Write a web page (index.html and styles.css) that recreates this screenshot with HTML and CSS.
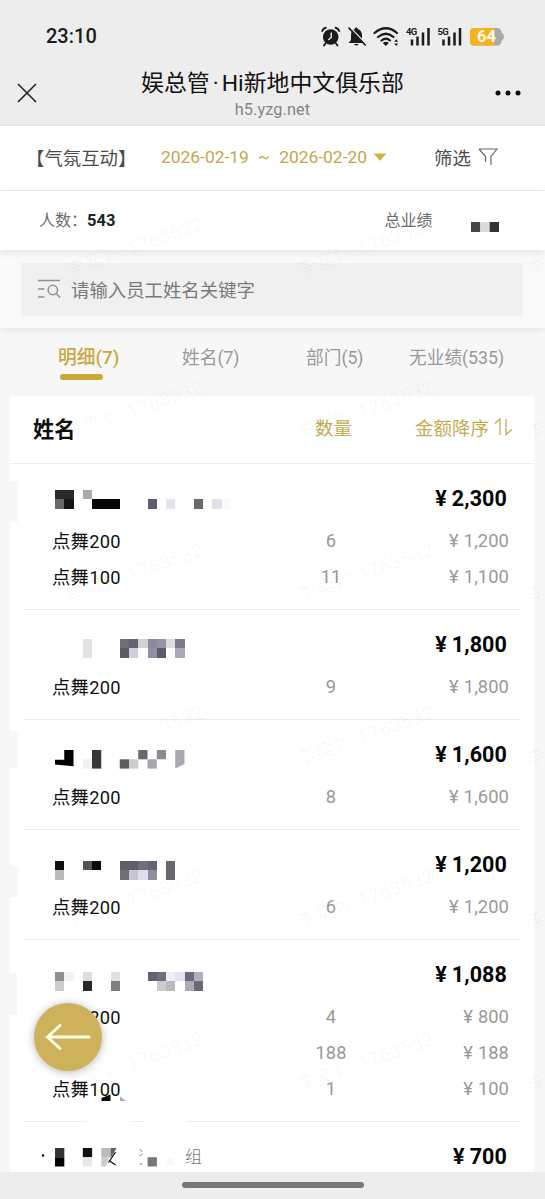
FILE: index.html
```html
<!DOCTYPE html>
<html lang="zh-CN">
<head>
<meta charset="utf-8">
<title>娱总管</title>
<link rel="stylesheet" href="styles.css">
</head>
<body>
<div class="screen">
  <header class="top">
    <div class="status">
      <span class="clock">23:10</span>
      <svg class="status-icons" width="186" height="24" viewBox="0 0 186 24">
        <g fill="none" stroke="#1b1b1b" stroke-width="1.9" stroke-linecap="round">
          <circle cx="11.700" cy="12" r="7.800" fill="#1b1b1b" stroke="none"/>
          <path d="M3.200 6 Q4 3.400 6.800 2.800M20.200 6 Q19.400 3.400 16.600 2.800M6.500 18.500 L5 20.500M17 18.500 L18.500 20.500"/>
          <path d="M12.200 8V12.500L9.800 14.500" stroke="#eee" stroke-width="1.400"/>
          <path d="M29.500 18H45.500L43 15V10C43 6.500 41 4.800 38.900 4.300C38.700 2 35.900 2 35.700 4.300C33.500 4.800 32 6.500 32 10V15Z" fill="#1b1b1b" stroke="none"/>
          <path d="M34.800 19Q37.300 22 39.800 19Z" fill="#1b1b1b" stroke="none"/>
          <path d="M31.500 2.800L47.500 19.300" stroke="#ededed" stroke-width="1.300"/>
          <path d="M30 3.200L46.200 20" stroke-width="1.700"/>
          <path d="M55.500 8Q67 -1.500 78 8M59 12Q67 5.500 74.500 12M62.500 15.500Q67 11.800 71 15.500" stroke-width="2.200"/>
          <path d="M63.800 18Q66.800 15.500 69.800 18L66.800 21Z" fill="#1b1b1b" stroke="none"/>
          <path d="M75.200 16.800L77.200 14.200L79.200 16.800ZM75.200 18.500H79.200L77.200 21Z" fill="#1b1b1b" stroke="none"/>
          <path d="M93 14.500V20.500M98.500 11.500V20.500M104 7.500V20.500M109.500 3V20.500M124.500 14.500V20.500M130 11.500V20.500M135.500 7.500V20.500M141 3V20.500" stroke-width="2.500" stroke-linecap="butt"/>
        </g>
        <text x="87" y="9.800" class="net">4G</text>
        <text x="118.500" y="9.800" class="net">5G</text>
        <path d="M155 3H178.500Q182 3 182.500 7.500Q185 9 185 11.700Q185 14.500 182.500 15.900Q182 20.500 178.500 20.500H155Q151 20.500 151 16.500V7Q151 3 155 3Z" fill="#aaa9a7"/>
        <path d="M155 3H175V20.500H155Q151 20.500 151 16.500V7Q151 3 155 3Z" fill="#f5b31d"/>
        <text x="158" y="17.300" class="battery">64</text>
      </svg>
    </div>
    <div class="nav">
      <svg class="close" width="20" height="20" viewBox="0 0 20 20"><path d="M1 1L19 19M19 1L1 19" stroke="#222" stroke-width="1.600" fill="none"/></svg>
      <div class="nav-title"><div class="title">娱总管<span class="dot">·</span>Hi新地中文俱乐部</div><div class="host">h5.yzg.net</div></div>
      <svg class="more" width="26" height="6" viewBox="0 0 26 6"><circle cx="3" cy="3" r="2.500"/><circle cx="13" cy="3" r="2.500"/><circle cx="23" cy="3" r="2.500"/></svg>
    </div>
  </header>

  <section class="filter">
    <span class="category">【气氛互动】</span>
    <span class="dates"><span>2026-02-19</span><span class="tilde">~</span><span>2026-02-20</span></span>
    <svg class="caret" width="14" height="8" viewBox="0 0 14 8"><path d="M0.500 0.500H13.500L7 7.800Z" fill="#d0b23f"/></svg>
    <span class="choose">筛选</span>
    <svg class="funnel" width="20" height="18" viewBox="0 0 20 18"><path d="M1 1H19L13 8.500V17M1 1L7.500 8.500V14" fill="none" stroke="#666" stroke-width="1.200"/></svg>
  </section>

  <section class="summary">
    <span>人数：</span><b>543</b>
    <span class="total">总业绩</span>
    <svg class="total-mask" width="28" height="10" viewBox="0 0 3 1" preserveAspectRatio="none"><path d="M0 0h1v1H0z" fill="#454545"/><path d="M1 0h1v1H1z" fill="#dcdcdc"/><path d="M2 0h1v1H2z" fill="#333"/></svg>
  </section>

  <section class="search">
    <div class="search-box">
      <svg width="24" height="20" viewBox="0 0 24 20"><g fill="none" stroke="#909090" stroke-width="1.500"><path d="M1 1.500H23M1 10H7.500M1 18H7.500M19 14.500L23.200 18.500"/><circle cx="15.800" cy="11" r="4.700"/></g></svg>
      <span>请输入员工姓名关键字</span>
    </div>
  </section>

  <nav class="tabs">
    <span class="tab active">明细(7)</span>
    <span class="tab">姓名(7)</span>
    <span class="tab">部门(5)</span>
    <span class="tab">无业绩(535)</span>
  </nav>

  <main class="card">
    <div class="card-head">
      <b>姓名</b><span class="count">数量</span>
      <span class="sort">金额降序<svg width="19" height="18" viewBox="0 0 19 18"><path d="M1 5.500L6 1V17M12 1V16.500L18 11.500" fill="none" stroke="#c3ac55" stroke-width="1.300"/></svg></span>
    </div>

    <div class="group">
      <div class="row lead">
        <svg class="mosaic m1" viewBox="0 0 20 2" preserveAspectRatio="none" shape-rendering="crispEdges">
          <path d="M0 0h2v1H0z" fill="#2a2a2a"/><path d="M0 1h1v1H0z" fill="#686868"/><path d="M1 1h1v1H1z" fill="#151515"/><path d="M3 0h1v1H3z" fill="#aaa"/><path d="M4 1h3v1H4z" fill="#080808"/><path d="M10 1h1v1h-1z" fill="#5e5c70"/><path d="M12 1h1v1h-1z" fill="#e4e4ef"/><path d="M15 1h1v1h-1z" fill="#6a6a6a"/><path d="M17 1h1v1h-1z" fill="#e0e0ec"/><path d="M18 1h1v1h-1z" fill="#f9f9fb"/>
        </svg>
        <span class="money"><i>¥</i>2,300</span>
      </div>
      <div class="row"><span class="name">点舞200</span><span class="count">6</span><span class="money"><i>¥</i>1,200</span></div>
      <div class="row"><span class="name">点舞100</span><span class="count">11</span><span class="money"><i>¥</i>1,100</span></div>
    </div>

    <div class="group">
      <div class="row lead">
        <svg class="mosaic m2" viewBox="0 0 20 2" preserveAspectRatio="none" shape-rendering="crispEdges">
          <path d="M3 0h1v2H3z" fill="#e3e3e3"/><path d="M7 0h1v1H7z" fill="#6f6f70"/><path d="M8 0h1v1H8z" fill="#65646d"/><path d="M9 0h1v1H9z" fill="#d1d1d5"/><path d="M10 0h1v1h-1z" fill="#8a899c"/><path d="M11 0h1v1h-1z" fill="#9493a2"/><path d="M12 0h1v1h-1z" fill="#dcdce4"/><path d="M13 0h1v1h-1z" fill="#7d7b8b"/><path d="M7 1h1v1H7z" fill="#5c5b64"/><path d="M8 1h1v1H8z" fill="#cfcfda"/><path d="M10 1h1v1h-1z" fill="#9190a2"/><path d="M11 1h1v1h-1z" fill="#5c596e"/><path d="M13 1h1v1h-1z" fill="#aaa9b7"/>
        </svg>
        <span class="money"><i>¥</i>1,800</span>
      </div>
      <div class="row"><span class="name">点舞200</span><span class="count">9</span><span class="money"><i>¥</i>1,800</span></div>
    </div>

    <div class="group">
      <div class="row lead">
        <svg class="mosaic m3" viewBox="0 0 20 2" preserveAspectRatio="none">
          <path d="M1 0h1v1.750L0 1.550V1.050H1z" fill="#000"/><path d="M3 1h1v1H3z" fill="#f0f0f0"/><path d="M4 0h1v2H4z" fill="#383838"/><path d="M7 1h1v1H7z" fill="#5c5c60"/><path d="M8 1h1v1H8z" fill="#ccc"/><path d="M9 0h1v1H9z" fill="#67676d"/><path d="M10 1h1v1h-1z" fill="#a5a5ab"/><path d="M11 0h1v1h-1z" fill="#8c8c90"/><path d="M13 0h1v1.500L13 2z" fill="#a9a8b5"/>
        </svg>
        <span class="money"><i>¥</i>1,600</span>
      </div>
      <div class="row"><span class="name">点舞200</span><span class="count">8</span><span class="money"><i>¥</i>1,600</span></div>
    </div>

    <div class="group">
      <div class="row lead">
        <svg class="mosaic m4" viewBox="0 0 20 2" preserveAspectRatio="none" shape-rendering="crispEdges">
          <path d="M0 0h1v1H0z" fill="#111"/><path d="M0 1h1v1H0z" fill="#bbb"/><path d="M3 0h1v1H3z" fill="#555"/><path d="M4 0h1v1H4z" fill="#0a0a0a"/><path d="M7 0h2v1H7z" fill="#5f5d6b"/><path d="M9 0h1v1H9z" fill="#706f80"/><path d="M10 0h1v1h-1z" fill="#65636f"/><path d="M7 1h1v1H7z" fill="#6f6e78"/><path d="M8 1h1v1H8z" fill="#c5c5d2"/><path d="M9 1h1v1H9z" fill="#dfdeec"/><path d="M10 1h1v1h-1z" fill="#908f9b"/><path d="M12 0h1v2h-1z" fill="#67656f"/>
        </svg>
        <span class="money"><i>¥</i>1,200</span>
      </div>
      <div class="row"><span class="name">点舞200</span><span class="count">6</span><span class="money"><i>¥</i>1,200</span></div>
    </div>

    <div class="group">
      <div class="row lead">
        <svg class="mosaic m5" viewBox="0 0 20 2" preserveAspectRatio="none" shape-rendering="crispEdges">
          <path d="M0 0h1v1H0z" fill="#8f8f8f"/><path d="M1 0h1v1H1z" fill="#f2f2f2"/><path d="M0 1h1v1H0z" fill="#ccc"/><path d="M3 0h1v1H3z" fill="#ddd"/><path d="M3 1h1v1H3z" fill="#282828"/><path d="M6 0h1v1H6z" fill="#e0e0e0"/><path d="M6 1h1v1H6z" fill="#7e7e7e"/><path d="M10 0h1v1h-1z" fill="#64626e"/><path d="M11 0h1v1h-1z" fill="#706f7a"/><path d="M12 0h1v1h-1z" fill="#efeff4"/><path d="M13 0h1v1h-1z" fill="#e3e2ee"/><path d="M14 0h1v1h-1z" fill="#6d6b77"/><path d="M15 0h1v1h-1z" fill="#b0afbd"/><path d="M11 1h1v1h-1z" fill="#ccc"/><path d="M12 1h1v1h-1z" fill="#bbb"/><path d="M14 1h1v1h-1z" fill="#abaab8"/><path d="M15 1h1v1h-1z" fill="#6b6976"/>
        </svg>
        <span class="money"><i>¥</i>1,088</span>
      </div>
      <div class="row"><span class="name">点舞200</span><span class="count">4</span><span class="money"><i>¥</i>800</span></div>
      <div class="row"><span class="name"></span><span class="count">188</span><span class="money"><i>¥</i>188</span></div>
      <div class="row"><span class="name">点舞100</span><span class="count">1</span><span class="money"><i>¥</i>100</span></div>
    </div>

    <div class="group">
      <div class="row lead">
        <svg class="mosaic m6" viewBox="0 0 185 18.600">
          <circle cx="-12" cy="7.500" r="1.200"/>
          <path d="M0 0h9.300v9.300H0z" fill="#333"/><path d="M0 9.300h9.300v9.300H0z"/><path d="M27.800 0h9.300v9.300h-9.300z" fill="#111"/><path d="M27.800 9.300h9.300v9.300h-9.300z" fill="#e8e8e8"/><path d="M46.300 0h9.300v9.300h-9.300z" fill="#bbb"/><path d="M46.300 9.300H54L51 18.600h-4.700z" fill="#ccc"/><path d="M55.600 0h6l-6 10z" fill="#666"/><path d="M60.500 4L53.500 14.500M54 12.500L60.500 17" stroke="#111" stroke-width="1.300" fill="none"/><path d="M84.500 1.500l3 2M84.500 8l3-2M84.500 16h3" stroke="#888" fill="none"/><path d="M92.600 9.300h9.300v9.300h-9.300z" fill="#777"/><path d="M112 10h7v7h-7z" fill="#f8f8f8"/>
          <text x="130" y="14.500" class="fragment">组</text>
        </svg>
        <span class="money"><i>¥</i>700</span>
      </div>
    </div>
  </main>

  <footer class="home"><div class="home-bar"></div></footer>

  <svg class="overlay" width="545" height="1199" viewBox="0 0 545 1199">
    <g fill="#f7f7f7"><path d="M10 481h8v41h-8zM10 731h8v37h-8zM10 866h8v31h-8zM10 973h7v42h-7z"/></g>
    <path d="M87 1120.500h44M144 1120.500h42" stroke="#fff" stroke-width="3"/>
    <path d="M101.500 1098L110.500 1094.500V1101H101.500Z" fill="#050505"/><path d="M120 1096.500L126 1101H120Z" fill="#aaa"/>
    <g class="watermark">
      <text transform="translate(69 277) rotate(-19.5)">李奕妙·1763532</text><text transform="translate(300 277) rotate(-19.5)">李奕妙·1763532</text><text transform="translate(530 277) rotate(-19.5)">李</text>
      <text transform="translate(69 440) rotate(-19.5)">李奕妙·1763532</text><text transform="translate(300 440) rotate(-19.5)">李奕妙·1763532</text><text transform="translate(530 440) rotate(-19.5)">李</text>
      <text transform="translate(69 603) rotate(-19.5)">李奕妙·1763532</text><text transform="translate(300 603) rotate(-19.5)">李奕妙·1763532</text><text transform="translate(530 603) rotate(-19.5)">李</text>
      <text transform="translate(163 733) rotate(-19.5)">3532</text><text transform="translate(300 766) rotate(-19.5)">李奕妙·1763532</text><text transform="translate(530 766) rotate(-19.5)">李</text>
      <text transform="translate(69 929) rotate(-19.5)">李奕妙·1763532</text><text transform="translate(300 929) rotate(-19.5)">李奕妙·1763532</text><text transform="translate(530 929) rotate(-19.5)">李</text>
      <text transform="translate(69 1092) rotate(-19.5)">李奕妙·1763532</text><text transform="translate(300 1092) rotate(-19.5)">李奕妙·1763532</text><text transform="translate(530 1092) rotate(-19.5)">李</text>
    </g>
  </svg>
  <div class="back"><svg width="46" height="28" viewBox="0 0 46 28"><path d="M44 14H3M15 2.500L2.500 14L15 25.500" fill="none" stroke="#fffbe8" stroke-width="3" stroke-linecap="round"/></svg></div>
</div>
</body>
</html>
```
FILE: styles.css
```css
* { box-sizing: border-box; }
body { margin: 0; background: #f7f7f7; font-family: Roboto, "Noto Sans CJK SC", sans-serif; color: #111; }
.screen { position: relative; width: 545px; height: 1199px; overflow: hidden; display: flex; flex-direction: column; white-space: nowrap; }
.top { height: 126px; flex: none; background: #ededed; border-bottom: 1px solid #e6e6e6; }
.status { height: 62px; padding: 12px 40px 2px 46px; display: flex; justify-content: space-between; align-items: center; }
.clock { font-size: 20px; font-weight: 500; color: #1b1b1b; }
.status-icons { display: block; margin-top: 2px; }
.net { font: 700 9.5px Roboto, sans-serif; fill: #1b1b1b; letter-spacing: -.6px; }
.battery { font: 700 16.5px Roboto, sans-serif; fill: #fffbe6; }
.nav { height: 63px; display: grid; grid-template-columns: 60px 1fr 60px; }
.close { margin: 21px 0 0 17px; }
.more { margin: 28px 0 0 10px; fill: #111; }
.nav-title { text-align: center; }
.title { font-size: 22.9px; line-height: 30px; margin-top: 7px; color: #111; font-weight: 400; }
.dot { margin: 0 3px; }
.host { font-size: 16.3px; line-height: 20px; margin-top: 1px; color: #858585; letter-spacing: .1px; }
.filter { height: 65px; flex: none; background: #fff; border-bottom: 1px solid #efefef; padding: 0 0 3px 26px; display: flex; align-items: center; font-size: 18.4px; color: #4c4c4c; }
.category { width: 135px; }
.dates { width: 206px; display: flex; justify-content: space-between; font-size: 17.4px; color: #c5a64a; }
.caret { margin-left: 6px; }
.choose { margin-left: 47px; }
.funnel { margin-left: 7px; }
.summary { height: 59px; flex: none; background: #fff; padding: 0 0 1px 39px; display: flex; align-items: center; font-size: 16px; color: #6c6c6c; box-shadow: 0 2px 8px rgba(0,0,0,.1); position: relative; }
.summary span { margin-top: -2px; }
.summary b { color: #222; font-size: 16.5px; }
.summary .total { margin-left: 269px; }
.total-mask { margin: 14px 0 0 39px; }
.search { height: 78px; flex: none; background: #fafafa; padding: 13px 22px 12px 21px; box-shadow: 0 2px 7px rgba(0,0,0,.08); }
.search-box { height: 53px; background: #f0f0f0; display: flex; align-items: center; gap: 10px; padding: 0 0 2px 16px; font-size: 18.4px; color: #7a7a7a; }
.tabs { height: 68px; flex: none; display: grid; grid-template-columns: 55px 125px 123px 102px 1fr; padding-top: 17px; font-size: 17.7px; line-height: 27px; color: #999; }
.tab:first-child { grid-column: 2; padding-left: 3px; }
.tab:nth-child(2) { padding-left: 2px; }
.tab:nth-child(3) { padding-left: 3px; }
.tab:nth-child(4) { padding-left: 4px; }
.active { font-size: 18.8px; font-weight: 500; color: #c9a93f; }
.active::after { content: ""; display: block; width: 43px; height: 6px; margin: 2px 0 0 2px; border-radius: 3px; background: #cba936; }
.card { height: 776px; flex: none; margin: 0 11px 0 10px; background: #fff; border-radius: 4px; overflow: hidden; }
.card-head { height: 68px; border-bottom: 1px solid #ececec; display: grid; grid-template-columns: 254px 93px 1fr; align-items: center; padding: 0 21px 5px 23px; font-size: 18.5px; color: #c3ac55; }
.card-head b { font-size: 21.2px; color: #111; }
.count { text-align: center; }
.sort { display: flex; justify-content: flex-end; align-items: center; gap: 5px; }
.group { margin: 0 14px; padding: 10px 0 15px; border-bottom: 1px solid #ededed; }
.row { height: 36px; display: grid; grid-template-columns: 235px 88px 1fr; align-items: center; padding: 0 11px 0 28px; font-size: 18.3px; color: #999; }
.row .name { color: #111; letter-spacing: .3px; }
.lead { height: 48px; grid-template-columns: 1fr 120px; padding-right: 13px; font-size: 21.5px; font-weight: 700; color: #050505; }
.money { display: flex; justify-content: flex-end; align-items: center; letter-spacing: .1px; }
.money i { font-style: normal; margin-right: 5px; }
.mosaic { width: 185px; height: 18.600px; margin-left: 3.300px; align-self: start; overflow: visible; }
.m1 { margin-top: 16px; }
.m2 { margin-top: 19px; }
.m3 { margin-top: 19.500px; }
.m4 { margin-top: 20.500px; }
.m5 { margin-top: 22px; }
.m6 { margin-top: 16px; }
.fragment { font: 300 17px "Noto Sans CJK SC", sans-serif; fill: #777; }
.home { flex: 1; background: #ededed; display: flex; justify-content: center; padding-top: 10px; }
.home-bar { width: 182px; height: 6px; border-radius: 3px; background: #777; }
.overlay { position: absolute; left: 0; top: 0; pointer-events: none; }
.watermark { font-size: 19px; letter-spacing: .65px; fill: rgba(0,0,0,.035); }
.back { position: absolute; left: 34px; top: 1003px; width: 68px; height: 68px; border-radius: 50%; background: #ceb25b; box-shadow: 0 1px 8px rgba(0,0,0,.3); display: flex; align-items: center; justify-content: center; }
```
